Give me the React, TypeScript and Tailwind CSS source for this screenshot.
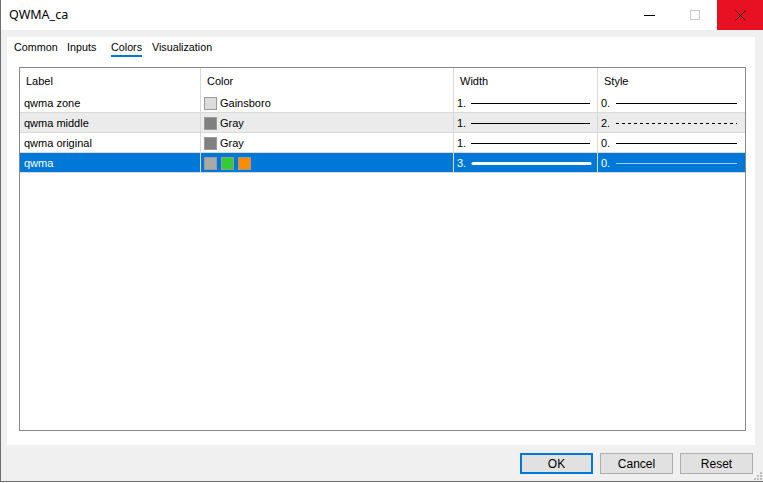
import React from 'react'

const font = { fontFamily: '"Liberation Sans", Arial, sans-serif' }

type Row = {
  label: string
  swatches: string[]
  colorName?: string
  width: string
  thick?: boolean
  style: string
  dashed?: boolean
}

const rows: Row[] = [
  { label: 'qwma zone', swatches: ['#dcdcdc'], colorName: 'Gainsboro', width: '1.', style: '0.' },
  { label: 'qwma middle', swatches: ['#808080'], colorName: 'Gray', width: '1.', style: '2.', dashed: true },
  { label: 'qwma original', swatches: ['#808080'], colorName: 'Gray', width: '1.', style: '0.' },
  { label: 'qwma', swatches: ['#a9a9a9', '#32cd32', '#ff8c00'], width: '3.', thick: true, style: '0.' },
]

function TitleBar() {
  return (
    <div className="flex h-[30px] items-center bg-white">
      <span className="ml-[8px] text-[12.5px] text-black" style={{ fontFamily: '"Noto Sans", sans-serif' }}>
        QWMA_ca
      </span>
      <div className="ml-auto flex h-full items-center">
        <div className="flex h-full w-[45px] items-center justify-center">
          <div className="mt-[1px] h-px w-[11px] bg-black" />
        </div>
        <div className="flex h-full w-[45px] items-center justify-center">
          <div className="h-[10px] w-[10px] border border-[#c8c8c8]" />
        </div>
        <div className="flex h-full w-[46px] items-center justify-center bg-[#e81123]">
          <svg width="11" height="11" viewBox="0 0 11 11">
            <path d="M0.5 0.5 L10.5 10.5 M10.5 0.5 L0.5 10.5" stroke="#1a1a1a" strokeWidth="1" />
          </svg>
        </div>
      </div>
    </div>
  )
}

function Tabs() {
  const tabs = [
    { label: 'Common', w: 'w-[53px]' },
    { label: 'Inputs', w: 'w-[44px]' },
    { label: 'Colors', w: 'w-[41px]' },
    { label: 'Visualization', w: 'w-[70px]' },
  ]
  return (
    <div className="flex h-[20px] items-stretch pl-[7px] text-[10.75px] text-black">
      {tabs.map((t) => (
        <div key={t.label} className={`flex ${t.w}`}>
          <div className="relative flex items-center">
            {t.label}
            {t.label === 'Colors' && <div className="absolute bottom-0 left-0 right-0 h-[2px] bg-[#0078d7]" />}
          </div>
        </div>
      ))}
    </div>
  )
}

function Cell({ children, className = '' }: { children?: React.ReactNode; className?: string }) {
  return <div className={`flex items-center border-r border-[#d9d9d9] pt-[1px] ${className}`}>{children}</div>
}

function TableRow({ row, index }: { row: Row; index: number }) {
  const selected = index === 3
  const bg = selected ? 'bg-[#0078d7] text-white' : index === 1 ? 'bg-[#ebebeb] text-black' : 'bg-white text-black'
  const lineColor = selected ? '#ffffff' : '#000000'
  return (
    <div className={`grid h-[20px] grid-cols-[181px_253px_144px_147px] border-b border-[#d9d9d9] text-[11px] ${bg}`}>
      <Cell className="pl-[4px]">{row.label}</Cell>
      <Cell className="gap-[4px] pl-[3px]">
        {row.swatches.map((c, i) => (
          <div key={i} className="h-[13px] w-[13px] border border-[#9a9a9a]" style={{ background: c }} />
        ))}
        {row.colorName && <span className="ml-[-1px]">{row.colorName}</span>}
      </Cell>
      <Cell className="pl-[3px]">
        <span className="w-[14px]">{row.width}</span>
        <svg width="122" height="5">
          {row.thick ? (
            <line x1="2" y1="2.5" x2="119" y2="2.5" stroke={lineColor} strokeWidth="3" strokeLinecap="round" />
          ) : (
            <line x1="0" y1="2.5" x2="119" y2="2.5" stroke={lineColor} strokeWidth="1" />
          )}
        </svg>
      </Cell>
      <Cell className="border-r-0 pl-[3px]">
        <span className="w-[15px]">{row.style}</span>
        <svg width="122" height="5">
          <line
            x1="0"
            y1="2.5"
            x2="121"
            y2="2.5"
            stroke={selected ? '#9fd0f5' : '#000000'}
            strokeWidth="1"
            strokeDasharray={row.dashed ? '3 3' : undefined}
          />
        </svg>
      </Cell>
    </div>
  )
}

function Table() {
  const headers = ['Label', 'Color', 'Width', 'Style']
  return (
    <div className="ml-[12px] mt-[10px] h-[364px] w-[727px] border border-[#828790] bg-white">
      <div className="grid h-[25px] grid-cols-[181px_253px_144px_147px] text-[11px] text-black">
        {headers.map((h, i) => (
          <div key={h} className={`flex items-center pl-[6px] pt-[2px] ${i < 3 ? 'border-r border-[#d9d9d9]' : ''}`}>
            {h}
          </div>
        ))}
      </div>
      {rows.map((r, i) => (
        <TableRow key={r.label} row={r} index={i} />
      ))}
    </div>
  )
}

function Button({ label, primary }: { label: string; primary?: boolean }) {
  return (
    <div
      className={`flex h-[21px] w-[73px] items-center justify-center bg-[#e1e1e1] text-[12px] text-black ${
        primary ? 'border-2 border-[#0078d7]' : 'border border-[#adadad]'
      }`}
    >
      {label}
    </div>
  )
}

export default function App() {
  return (
    <div className="h-[483px] w-[763px] overflow-hidden bg-white" style={font}>
      <div className="flex h-[482px] flex-col border-b border-l border-[#6e6e6e]">
        <TitleBar />
        <div className="relative flex flex-1 flex-col bg-[#f0f0f0]">
          <div className="ml-[6px] mt-[7px] h-[408px] w-[748px] bg-white">
            <Tabs />
            <Table />
          </div>
          <div className="mr-[10px] mt-[8px] flex justify-end gap-[7px]">
            <Button label="OK" primary />
            <Button label="Cancel" />
            <Button label="Reset" />
          </div>
          {/* size grip */}
          <svg className="absolute bottom-[1px] right-[1px]" width="8" height="8" viewBox="0 0 8 8">
            {[
              [6, 0],
              [6, 3],
              [3, 3],
              [6, 6],
              [3, 6],
              [0, 6],
            ].map(([x, y], i) => (
              <rect key={i} x={x} y={y} width="2" height="2" fill="#bdbdbd" />
            ))}
          </svg>
        </div>
      </div>
    </div>
  )
}
